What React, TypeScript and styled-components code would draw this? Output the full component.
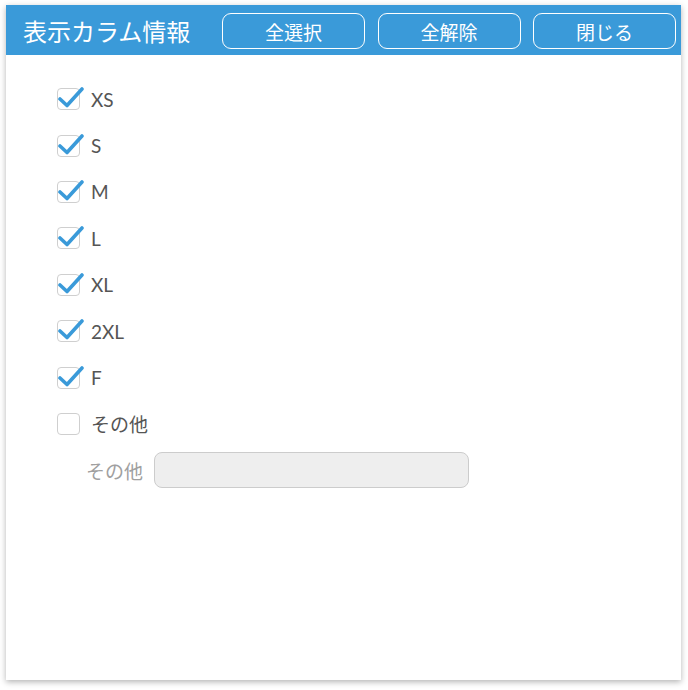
import styled, { createGlobalStyle } from 'styled-components';

const sizes = ['XS', 'S', 'M', 'L', 'XL', '2XL', 'F'];

const GlobalStyle = createGlobalStyle`
  body {
    margin: 0;
    background: #ffffff;
    font-family: Lato, "Noto Sans CJK JP", sans-serif;
  }
`;

function CheckBox({ checked }: { checked: boolean }) {
  return (
    <Box>
      {checked && (
        <CheckMark viewBox="0 0 26 24" width="26" height="24">
          <path d="M2 13 L9 19.5 L24 3" fill="none" stroke="#3a9ad9" strokeWidth="3.6" strokeLinecap="round" strokeLinejoin="round" />
        </CheckMark>
      )}
    </Box>
  );
}

export default function App() {
  return (
    <>
      <GlobalStyle />
      <Panel>
        <Header>
          <Title>表示カラム情報</Title>
          <ButtonGroup>
            <HeaderButton>全選択</HeaderButton>
            <HeaderButton>全解除</HeaderButton>
            <HeaderButton>閉じる</HeaderButton>
          </ButtonGroup>
        </Header>
        <Body>
          {sizes.map((s) => (
            <Row key={s}>
              <CheckBox checked />
              <Label>{s}</Label>
            </Row>
          ))}
          <Row>
            <CheckBox checked={false} />
            <Label>その他</Label>
          </Row>
          <SubRow>
            <SubLabel>その他</SubLabel>
            <TextInput disabled />
          </SubRow>
        </Body>
      </Panel>
    </>
  );
}

const Panel = styled.div`
  margin: 5px 0 10px 6px;
  width: 675px;
  height: 675px;
  background: #ffffff;
  box-shadow: 0 2px 6px rgba(0, 0, 0, 0.3);
  display: flex;
  flex-direction: column;
`;

const Header = styled.header`
  height: 50px;
  background: #3a9ad9;
  display: flex;
  align-items: center;
  justify-content: space-between;
  padding: 0 5px 0 17px;
`;

const Title = styled.div`
  color: #ffffff;
  font-size: 24px;
`;

const ButtonGroup = styled.div`
  display: flex;
  gap: 12.5px;
  margin-top: 2px;
`;

const HeaderButton = styled.button`
  width: 143px;
  height: 36px;
  border: 1px solid #ffffff;
  border-radius: 9px;
  background: transparent;
  color: #ffffff;
  font-family: Lato, "Noto Sans CJK JP", sans-serif;
  font-size: 19px;
  padding: 0;
  cursor: pointer;
`;

const Body = styled.div`
  display: flex;
  flex-direction: column;
  padding: 21px 0 0 51px;
`;

const Row = styled.label`
  height: 46.4px;
  display: flex;
  align-items: center;
  gap: 11px;
`;

const Box = styled.span`
  position: relative;
  width: 21px;
  height: 20px;
  border: 1px solid #cfcfcf;
  border-radius: 4px;
  background: #ffffff;
  flex-shrink: 0;
`;

const CheckMark = styled.svg`
  position: absolute;
  left: 0;
  top: -3px;
`;

const Label = styled.span`
  color: #555555;
  font-size: 19px;
`;

const SubRow = styled.div`
  height: 46px;
  display: flex;
  align-items: center;
  gap: 11px;
  padding-left: 29px;
`;

const SubLabel = styled.span`
  color: #a0a0a0;
  font-size: 19px;
`;

const TextInput = styled.input`
  width: 315px;
  height: 36px;
  box-sizing: border-box;
  border: 1px solid #cccccc;
  border-radius: 8px;
  background: #eeeeee;
`;
